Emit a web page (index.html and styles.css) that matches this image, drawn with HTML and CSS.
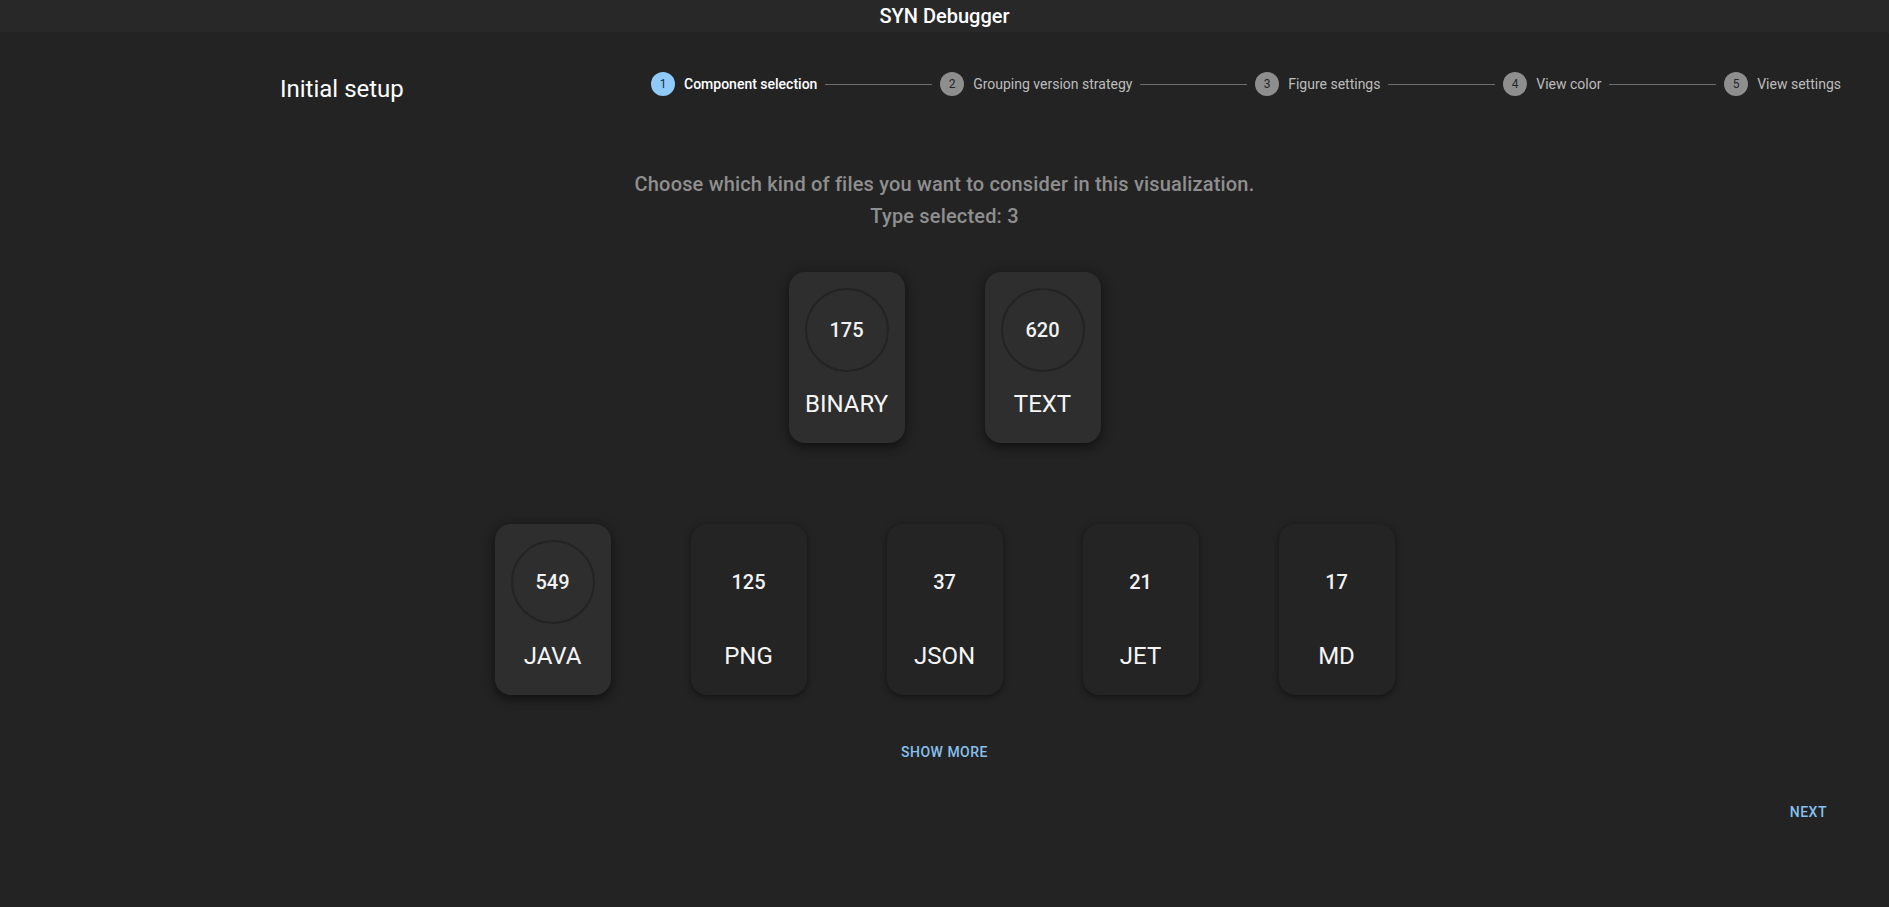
FILE: index.html
```html
<!DOCTYPE html>
<html lang="en">
<head>
<meta charset="utf-8">
<title>SYN Debugger</title>
<link rel="stylesheet" href="styles.css">
</head>
<body>
<div class="titlebar">SYN Debugger</div>
<main class="window">
  <header class="setup-header">
    <h1 class="setup-title">Initial setup</h1>
    <ol class="stepper">
      <li class="step active"><span class="step-num">1</span><span class="step-label">Component selection</span></li>
      <li class="step-line"></li>
      <li class="step"><span class="step-num">2</span><span class="step-label">Grouping version strategy</span></li>
      <li class="step-line"></li>
      <li class="step"><span class="step-num">3</span><span class="step-label">Figure settings</span></li>
      <li class="step-line"></li>
      <li class="step"><span class="step-num">4</span><span class="step-label">View color</span></li>
      <li class="step-line"></li>
      <li class="step"><span class="step-num">5</span><span class="step-label">View settings</span></li>
    </ol>
  </header>

  <section class="intro">
    <p>Choose which kind of files you want to consider in this visualization.</p>
    <p>Type selected: 3</p>
  </section>

  <div class="card-row row-top">
    <div class="type-card selected"><div class="count">175</div><div class="type-name">BINARY</div></div>
    <div class="type-card selected"><div class="count">620</div><div class="type-name">TEXT</div></div>
  </div>

  <div class="card-row row-bottom">
    <div class="type-card selected"><div class="count">549</div><div class="type-name">JAVA</div></div>
    <div class="type-card"><div class="count">125</div><div class="type-name">PNG</div></div>
    <div class="type-card"><div class="count">37</div><div class="type-name">JSON</div></div>
    <div class="type-card"><div class="count">21</div><div class="type-name">JET</div></div>
    <div class="type-card"><div class="count">17</div><div class="type-name">MD</div></div>
  </div>

  <button class="text-btn show-more">Show more</button>

  <div class="actions">
    <button class="text-btn">Next</button>
  </div>
</main>
</body>
</html>
```
FILE: styles.css
```css
* { box-sizing: border-box; }

html, body {
  margin: 0;
  padding: 0;
  height: 100%;
  background: #282828;
  font-family: Roboto, "Liberation Sans", Arial, sans-serif;
  color: #fff;
  overflow: hidden;
}

.titlebar {
  height: 32px;
  line-height: 32px;
  text-align: center;
  font-size: 20px;
  font-weight: 500;
  color: #fff;
  background: #282828;
}

.window {
  height: calc(100% - 32px);
  background: #232323;
  border-radius: 4px 4px 0 0;
  display: flex;
  flex-direction: column;
  align-items: center;
}

.setup-header {
  align-self: stretch;
  display: flex;
  align-items: flex-start;
  padding: 40px 48px 0 280px;
}

.setup-title {
  margin: 1px 0 1px 0;
  font-size: 24px;
  line-height: 32px;
  font-weight: 400;
  color: #fff;
  width: 371px;
  flex: none;
}

.stepper {
  flex: 1;
  display: flex;
  align-items: center;
  list-style: none;
  margin: 0;
  padding: 0;
  height: 24px;
}

.step {
  display: flex;
  align-items: center;
  gap: 9px;
  flex: none;
}

.step-num {
  width: 24px;
  height: 24px;
  border-radius: 50%;
  background: #8e8e8e;
  color: #262626;
  font-size: 12px;
  line-height: 24px;
  text-align: center;
}

.step-label {
  font-size: 14px;
  line-height: 20px;
  color: #bdbdbd;
}

.step.active .step-num {
  background: #90caf9;
  color: #1e2a36;
}

.step.active .step-label {
  color: #fff;
  font-weight: 500;
}

.step-line {
  flex: 1;
  height: 1px;
  background: #6e6e6e;
  margin: 0 8px;
}

.intro {
  margin-top: 62px;
  text-align: center;
  color: #8f8f8f;
  font-size: 20px;
  line-height: 32px;
  font-weight: 500;
  letter-spacing: 0.17px;
}

.intro p { margin: 0; }

.card-row {
  display: flex;
  gap: 80px;
}

.row-top { margin-top: 40px; }
.row-bottom { margin-top: 81px; }

.type-card {
  width: 116px;
  padding: 16px 16px 23px;
  border-radius: 16px;
  background: #242424;
  box-shadow: 0 2px 4px rgba(0, 0, 0, 0.3), 0 1px 8px rgba(0, 0, 0, 0.18);
  display: flex;
  flex-direction: column;
  align-items: center;
}

.type-card.selected {
  background: #2e2e2e;
  box-shadow: 0 4px 8px rgba(0, 0, 0, 0.35), 0 2px 14px rgba(0, 0, 0, 0.25);
}

.count {
  width: 84px;
  height: 84px;
  border-radius: 50%;
  border: 2px solid transparent;
  display: flex;
  align-items: center;
  justify-content: center;
  font-size: 20px;
  font-weight: 500;
  color: #f2f2f2;
}

.type-card.selected .count {
  border-color: #232323;
}

.type-name {
  margin-top: 16px;
  font-size: 24px;
  line-height: 32px;
  color: #f5f5f5;
}

.text-btn {
  background: none;
  border: 0;
  height: 36px;
  padding: 0 16px;
  font-family: inherit;
  font-size: 14px;
  font-weight: 500;
  letter-spacing: 0.5px;
  text-transform: uppercase;
  color: #88c0ee;
  cursor: pointer;
}

.show-more { margin-top: 39px; }

.actions {
  align-self: stretch;
  display: flex;
  justify-content: flex-end;
  margin-top: 24px;
  padding-right: 46px;
}
```
